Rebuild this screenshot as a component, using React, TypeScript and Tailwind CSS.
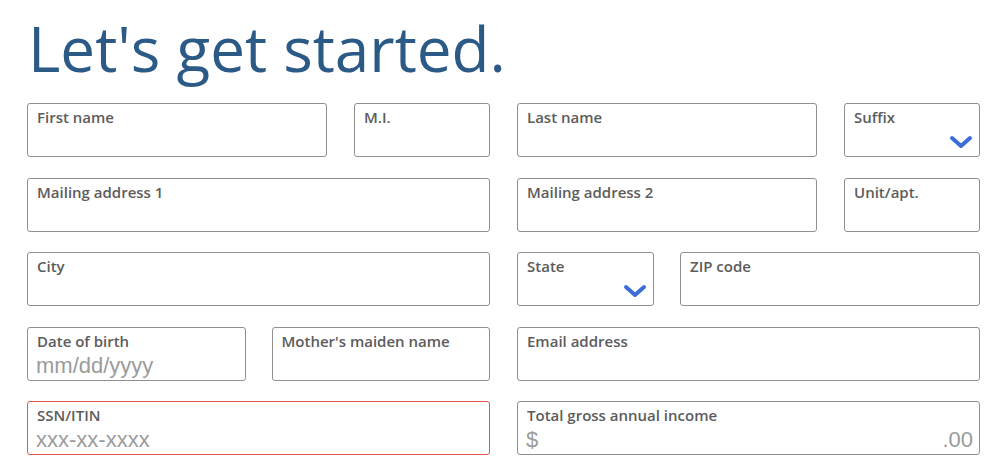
import React from "react";

function Chevron() {
  return (
    <svg width="26" height="16" viewBox="0 0 26 16" className="self-end mt-auto mb-[6px] -mr-[1px]">
      <path d="M4 4 L13 12 L22 4" fill="none" stroke="#3b6ed8" strokeWidth="4" strokeLinecap="round" strokeLinejoin="round" />
    </svg>
  );
}

function Field({
  label,
  placeholder,
  select,
  error,
  money,
  className = "",
}: {
  label: string;
  placeholder?: string;
  select?: boolean;
  error?: boolean;
  money?: boolean;
  className?: string;
}) {
  return (
    <div
      className={
        "h-[54px] flex flex-col rounded-[3px] border bg-white pl-[9px] pr-[6px] pt-[3px] " +
        (error ? "border-[#e3564f] " : "border-[#8f8f8f] ") +
        className
      }
    >
      <span className="text-[15px] leading-5 font-semibold text-[#5c5c5c] font-['Open_Sans',sans-serif]">{label}</span>
      {placeholder && (
        <span className="mt-[4px] -ml-[1px] text-[22px] leading-none text-[#9b9b9b] font-['Liberation_Sans',Arial,sans-serif]">
          {placeholder}
        </span>
      )}
      {money && (
        <div className="mt-[4px] -ml-[1px] flex justify-between text-[22px] leading-none text-[#9b9b9b] font-['Liberation_Sans',Arial,sans-serif]">
          <span>$</span>
          <span>.00</span>
        </div>
      )}
      {select && <Chevron />}
    </div>
  );
}

export default function App() {
  return (
    <div className="w-[1000px] h-[468px] bg-white pl-[27px] pr-[20px] pt-[17px] font-['Open_Sans',sans-serif]">
      <h1 className="ml-[1px] text-[62px] leading-none text-[#2b5a87] font-normal">Let's get started.</h1>

      <div className="mt-[24px] grid grid-cols-2 gap-x-[27px] gap-y-[20.5px]">
        <div className="flex gap-[27px]">
          <Field label="First name" className="flex-1" />
          <Field label="M.I." className="w-[136px]" />
        </div>
        <div className="flex gap-[27px]">
          <Field label="Last name" className="flex-1" />
          <Field label="Suffix" select className="w-[136px]" />
        </div>

        <Field label="Mailing address 1" />
        <div className="flex gap-[27px]">
          <Field label="Mailing address 2" className="flex-1" />
          <Field label="Unit/apt." className="w-[136px]" />
        </div>

        <Field label="City" />
        <div className="flex gap-[26px]">
          <Field label="State" select className="w-[137px]" />
          <Field label="ZIP code" className="flex-1" />
        </div>

        <div className="flex gap-[26px]">
          <Field label="Date of birth" placeholder="mm/dd/yyyy" className="flex-1" />
          <Field label="Mother's maiden name" className="flex-1" />
        </div>
        <Field label="Email address" />

        <Field label="SSN/ITIN" placeholder="xxx-xx-xxxx" error />
        <Field label="Total gross annual income" money />
      </div>
    </div>
  );
}
